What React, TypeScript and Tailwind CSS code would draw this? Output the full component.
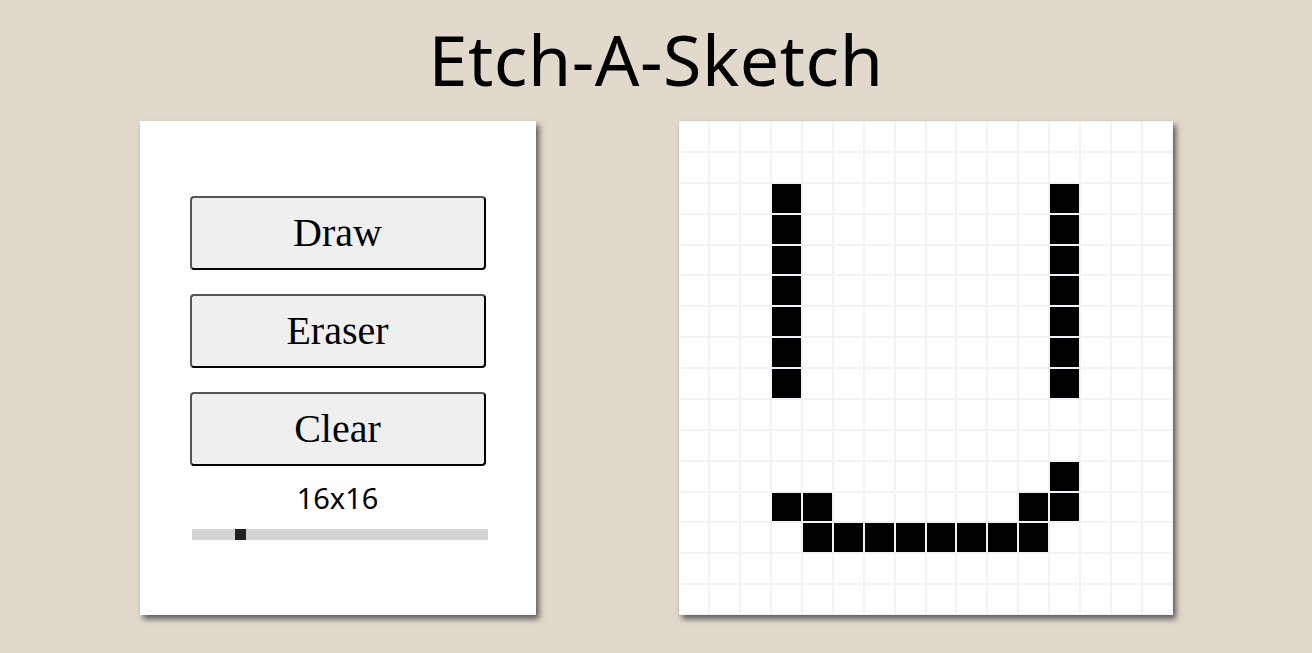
import { useState } from 'react'

const SIZE = 16

// cells that are drawn black in the reference (row, col)
const initialInk = (() => {
  const s = new Set<string>()
  for (let r = 2; r <= 8; r++) {
    s.add(`${r}-3`)
    s.add(`${r}-12`)
  }
  s.add('11-12')
  ;[3, 4, 11, 12].forEach((c) => s.add(`12-${c}`))
  for (let c = 4; c <= 11; c++) s.add(`13-${c}`)
  return s
})()

function ToolButton({ label, onClick }: { label: string; onClick?: () => void }) {
  return (
    <button
      onClick={onClick}
      className="w-[296px] h-[74px] bg-[#efefef] rounded-[4px] border-2 border-t-[#555] border-l-[#555] border-r-black border-b-black text-[40px] text-black font-['Liberation_Serif',serif] leading-none"
    >
      {label}
    </button>
  )
}

export default function App() {
  const [ink, setInk] = useState<Set<string>>(initialInk)
  const [mode, setMode] = useState<'draw' | 'erase'>('draw')
  const [size, setSize] = useState(16)

  const paint = (key: string) => {
    setInk((prev) => {
      const next = new Set(prev)
      if (mode === 'draw') next.add(key)
      else next.delete(key)
      return next
    })
  }

  const cells = []
  for (let r = 0; r < SIZE; r++) {
    for (let c = 0; c < SIZE; c++) {
      const key = `${r}-${c}`
      cells.push(
        <div
          key={key}
          onMouseEnter={(e) => e.buttons === 1 && paint(key)}
          onMouseDown={() => paint(key)}
          className={`border border-[#f2f2f8] ${ink.has(key) ? 'bg-black' : 'bg-white'}`}
        />
      )
    }
  }

  return (
    <div className="min-h-screen w-full bg-[#e1d9cc] flex flex-col items-center font-['Noto_Sans',sans-serif]">
      <h1 className="mt-[18px] h-[82px] text-[70px] leading-[82px] text-black tracking-[0.5px]">Etch-A-Sketch</h1>

      <div className="mt-[21px] flex gap-[143px]">
        {/* controls */}
        <div className="w-[396px] h-[494px] bg-white shadow-[3px_4px_6px_rgba(0,0,0,0.6)] flex flex-col items-center pt-[75px]">
          <div className="flex flex-col gap-[24px]">
            <ToolButton label="Draw" onClick={() => setMode('draw')} />
            <ToolButton label="Eraser" onClick={() => setMode('erase')} />
            <ToolButton label="Clear" onClick={() => setInk(new Set())} />
          </div>
          <p className="mt-[14px] text-[29px] leading-[36px] text-black">
            {SIZE}x{SIZE}
          </p>
          <input
            type="range"
            min={1}
            max={100}
            value={size}
            onChange={(e) => setSize(Number(e.target.value))}
            className="mt-[13px] ml-[4px] w-[296px] h-[11px] appearance-none bg-[#d3d3d3] outline-none [&::-webkit-slider-thumb]:appearance-none [&::-webkit-slider-thumb]:w-[11px] [&::-webkit-slider-thumb]:h-[11px] [&::-webkit-slider-thumb]:bg-[#222] [&::-webkit-slider-thumb]:cursor-pointer"
          />
        </div>

        {/* sketch grid */}
        <div className="w-[494px] h-[494px] bg-white shadow-[3px_4px_6px_rgba(0,0,0,0.6)] grid grid-cols-16 grid-rows-16">
          {cells}
        </div>
      </div>
    </div>
  )
}
